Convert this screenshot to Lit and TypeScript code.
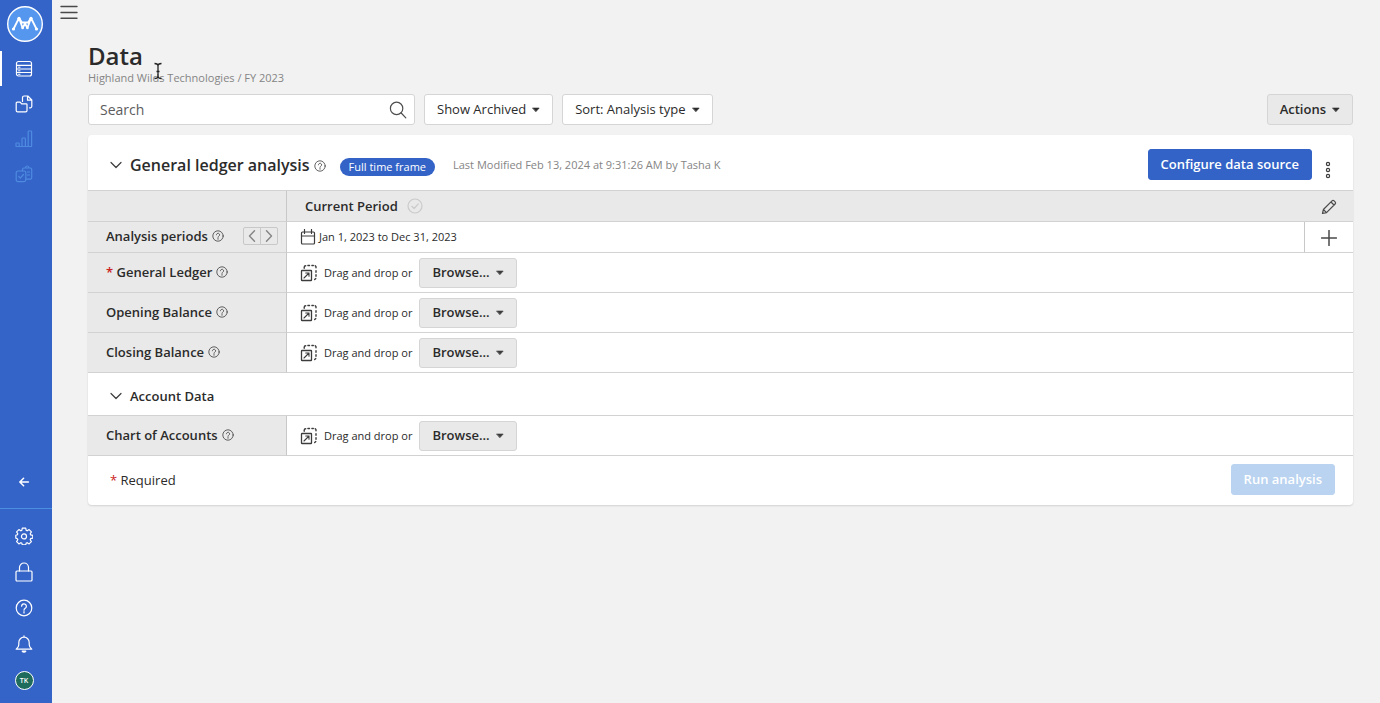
import { LitElement, html, css, svg, nothing } from "lit";
import { customElement, property } from "lit/decorators.js";

const shapes: Record<string, [string, unknown]> = {
  menu: ["0 0 18 14", svg`<path d="M1 1.5h16M1 7.5h16M1 13.2h16" stroke-width="1.4"/>`],
  data: ["0 0 18 18", svg`<rect x="1.5" y="1.5" width="15" height="14.5" rx="2"/><path d="M1.5 5.3h15M1.5 9h15M1.5 12.5h15" /><path d="M3.5 7.2h1.5M3.5 10.8h1.5M3.5 14.3h1.5" stroke-width="1"/>`],
  files: ["0 0 18 18", svg`<path d="M1.2 8.2a1 1 0 0 1 1-1h3l1.400 1.600h4.600a.8.8 0 0 1 .8.8v5.800a1.400 1.400 0 0 1-1.400 1.400H2.600a1.400 1.400 0 0 1-1.400-1.400z"/><path d="M7.500 6.500V2.600a1.600 1.600 0 0 1 1.600-1.600h3.700l4 4v6.200a1.600 1.600 0 0 1-1.600 1.600h-.7M12.500 1.200v4h4"/>`],
  chart: ["0 0 18 18", svg`<rect x="1" y="13" width="3.200" height="3.500" rx=".6"/><rect x="7" y="8" width="3.400" height="8.500" rx=".6"/><rect x="13.200" y="1" width="3.400" height="15.500" rx=".6"/><path d="M4.200 16.500h9"/>`],
  report: ["0 0 18 18", svg`<rect x="1.200" y="6" width="9.600" height="10.600" rx="1.800"/><path d="m3.800 11.500 1.600 1.700 3-3.700M7.500 5.800V4.400a1.400 1.400 0 0 1 1.400-1.400h6.400a1.400 1.400 0 0 1 1.400 1.400v8.400a1.400 1.400 0 0 1-1.400 1.400h-4.400M10.400 2.900c0-1 .8-1.900 1.800-1.900s1.800.9 1.800 1.900M12.500 7h2M12.500 10h2"/>`],
  back: ["0 0 18 18", svg`<path d="M13.400 9H5M8.600 5.200 4.800 9l3.800 3.800" stroke-width="1.500"/>`],
  gear: ["0 0 18 18", svg`<path d="M7.300 1.200h3.400l.5 2.200 1 .4 1.900-1.200 2.300 2.300-1.200 1.900.4 1 2.200.5v2.800l-2.200.6-.4 1 1.200 1.900-2.300 2.300-1.900-1.200-1 .4-.5 1.700H7.300l-.5-1.700-1-.4-1.900 1.200-2.300-2.300 1.200-1.900-.4-1-1.600-.6V8.300l1.600-.5.4-1-1.200-1.900 2.300-2.300 1.900 1.200 1-.4z" stroke-linejoin="round"/><circle cx="9" cy="9.400" r="2.500"/>`],
  lock: ["0 0 18 20", svg`<rect x="1" y="9" width="16" height="10" rx="1"/><path d="M4.500 9V5.500a4.500 4.500 0 0 1 9 0V9"/>`],
  help: ["0 0 18 18", svg`<circle cx="9" cy="9" r="7.800"/><path d="M6.600 7.200a2.400 2.400 0 1 1 3.600 2.100c-.8.500-1.200.9-1.200 1.900"/><path d="M9 12.700v1.200"/>`],
  bell: ["0 0 18 18", svg`<path d="M1.200 14.200c1.800-1.600 2.600-2.600 2.600-4.400V7.400a5.200 5.200 0 0 1 10.400 0v2.400c0 1.800.8 2.800 2.600 4.400zM9 2V.8"/><path d="M7.200 16.200a2 1.600 0 0 0 3.600 0z" fill="currentColor"/>`],
  search: ["0 0 18 18", svg`<circle cx="7.600" cy="7.400" r="6.200"/><path d="m12.200 12 4.600 4.800"/>`],
  chevron: ["0 0 12 12", svg`<path d="m1 3.500 5 5 5-5"/>`],
  left: ["0 0 12 12", svg`<path d="M8.500.8 3.500 6l5 5.200" stroke-width="1.400"/>`],
  right: ["0 0 12 12", svg`<path d="m3.500.8 5 5.200-5 5.200" stroke-width="1.400"/>`],
  dots: ["0 0 6 18", svg`<circle cx="3" cy="3" r="1.600"/><circle cx="3" cy="9" r="1.600"/><circle cx="3" cy="15" r="1.600"/>`],
  pencil: ["0 0 16 16", svg`<path d="m1.500 14.500.9-4L11 1.900a1.500 1.500 0 0 1 2.100 0l1 1a1.500 1.500 0 0 1 0 2.100L5.500 13.600zM10 3l3 3M2.400 10.500l3.100 3.100"/>`],
  plus: ["0 0 16 16", svg`<path d="M8 .5v15M.5 8h15" stroke-width="1.500"/>`],
  check: ["0 0 16 16", svg`<circle cx="8" cy="8" r="7"/><path d="m4.800 8.300 2.300 2.200 4.200-4.600"/>`],
  calendar: ["0 0 16 16", svg`<rect x="1.500" y="3" width="13" height="12" rx="1"/><path d="M1.500 7h13M4.500.5v4M11.500.5v4"/>`],
  drop: ["0 0 18 18", svg`<rect x="1.500" y="6.500" width="10" height="10" rx=".6" stroke-width="1.300"/><path d="m4 14 5-5M5.700 9H9v3.300" stroke-width="1.100"/><path d="M4.200 4.300V3.200a1.500 1.500 0 0 1 1.500-1.500M7.900 1.500h1.600M11.900 1.500h1.400M15.200 1.700l.8.9v1.200M16 6.800v1.400M16 10.800v1.500M15.800 14.600l-1.100 1" stroke-width="1.400"/>`],
  caret: ["0 0 8 6", svg`<path d="M.8 1h6.400L4 4.600z" fill="currentColor" stroke-width=".6"/>`],
};

@customElement("ui-icon")
class UiIcon extends LitElement {
  @property() name = "";
  @property({ type: Number }) size = 18;
  static styles = css`
    :host { display: inline-flex; flex: none; }
    svg { display: block; fill: none; stroke: currentColor; stroke-width: 1.2; stroke-linecap: round; stroke-linejoin: round; }
  `;
  render() {
    const [box, body] = shapes[this.name];
    const [, , w, h] = box.split(" ").map(Number);
    return html`<svg width=${this.size} height=${(this.size * h) / w} viewBox=${box} aria-hidden="true">${body}</svg>`;
  }
}

@customElement("app-sidebar")
class AppSidebar extends LitElement {
  static styles = css`
    :host { display: flex; flex-direction: column; width: 52px; flex: none; background: #3564c8; color: #fff; }
    .logo { display: block; width: 36px; height: 36px; margin: 6px 0 9px 7px; }
    .group { display: flex; flex-direction: column; }
    .item { display: flex; align-items: center; justify-content: center; height: 35px; padding: 0 6px 0 2px; color: inherit; border: 0; background: none; font: inherit; box-sizing: border-box; width: 100%; }
    .active { border-left: 2px solid #fff; padding-left: 0; }
    .off { color: #4e8be0; }
    .push { margin-top: auto; }
    .tools { border-top: 1px solid #4a8fe0; margin-top: 9px; padding: 9px 0 5px; }
    .tools .item { height: 36px; }
    .avatar { display: flex; align-items: center; justify-content: center; width: 19px; height: 19px; box-sizing: border-box; border-radius: 50%; border: 1px solid #fff; background: #1f6b5c; font: 600 7px "Open Sans", sans-serif; }
  `;
  render() {
    const link = (icon: string, label: string, cls = "") =>
      html`<a class="item ${cls}" href="#" aria-label=${label}><ui-icon name=${icon}></ui-icon></a>`;
    return html`
      <svg class="logo" viewBox="0 0 36 36" aria-label="Home">
        <circle cx="18" cy="18" r="17.300" fill="#5596ee" stroke="#fff" stroke-width="1.400"/>
        <path d="M6.500 23 12 12l3.600 10L18 17.500l2.400 4.500L24 12l5.500 11M12 12l3 4.500h6l3-4.500" fill="none" stroke="#fff" stroke-width="1.800" stroke-linejoin="round" stroke-linecap="round"/>
        <g fill="#fff"><circle cx="6.500" cy="23" r="1.600"/><circle cx="12" cy="12.300" r="1.600"/><circle cx="15.600" cy="22" r="1.300"/><circle cx="20.400" cy="22" r="1.300"/><circle cx="24" cy="12.300" r="1.600"/><circle cx="29.500" cy="23" r="1.600"/></g>
      </svg>
      <nav class="group">
        ${link("data", "Data", "active")} ${link("files", "Files")}
        ${link("chart", "Charts", "off")} ${link("report", "Reports", "off")}
      </nav>
      <button class="item push" aria-label="Back"><ui-icon name="back"></ui-icon></button>
      <div class="group tools">
        ${link("gear", "Settings")} ${link("lock", "Security")} ${link("help", "Help")} ${link("bell", "Notifications")}
        <button class="item" aria-label="Account"><span class="avatar">TK</span></button>
      </div>`;
  }
}

@customElement("app-root")
class AppRoot extends LitElement {
  static styles = css`
    :host { display: flex; min-height: 100vh; background: #f2f2f2; color: #2b2b2b; font: 13px/18px "Open Sans", sans-serif; }
    button, input { font: inherit; color: inherit; margin: 0; }
    button { cursor: pointer; }
    main { flex: 1; min-width: 0; }
    .plain { display: inline-flex; padding: 0; border: 0; background: none; color: #4a4a4a; }
    .menu { padding: 5px 8px; }
    .page { padding: 16px 27px 0 36px; }
    .head { position: relative; }
    h1 { margin: 0; font-size: 24px; line-height: 32px; font-weight: 600; }
    .crumb { margin: 0; font-size: 11px; line-height: 12px; color: #858585; }
    .cursor { position: absolute; left: 65px; top: 22px; }
    .bar { display: flex; gap: 9px; margin: 10px 0; }
    .search { display: flex; align-items: center; width: 327px; height: 31px; box-sizing: border-box; padding: 0 7px 0 11px; background: #fff; border: 1px solid #d5d5d5; border-radius: 3px; color: #4d4d4d; }
    .search input { flex: 1; min-width: 0; border: 0; padding: 0; outline: 0; background: none; font-size: 14px; }
    .search input::placeholder { color: #5c5c5c; opacity: 1; }
    .btn { display: inline-flex; align-items: center; gap: 6px; height: 31px; box-sizing: border-box; padding: 0 12px 2px; border: 1px solid #d5d5d5; border-radius: 3px; background: #fff; white-space: nowrap; }
    .btn ui-icon { margin-top: 3px; }
    .grey { background: #e9e9e9; font-weight: 600; }
    .blue { background: #3363c7; border-color: #3363c7; color: #fff; font-weight: 600; }
    .blue:disabled { background: #b9d3f0; border-color: #b9d3f0; color: #fff; }
    .end { margin-left: auto; }
    .card { background: #fff; border-radius: 4px; box-shadow: 0 1px 2px #0002; }
    .title { display: flex; align-items: center; height: 56px; box-sizing: border-box; padding: 4px 18px 0 22px; border-bottom: 1px solid #d2d2d2; }
    h2 { margin: 0 4px 0 8px; font-size: 16px; line-height: 24px; font-weight: 600; }
    .title ui-icon { color: #3c3c3c; }
    .tip { margin-top: 3px; }
    .pill { margin: 4px 18px 0 14px; padding: 0 9px; border-radius: 9px; background: #3363c7; color: #fff; font-size: 11px; line-height: 18px; font-weight: 500; }
    .meta { font-size: 11px; color: #858585; }
    .kebab { margin: 10px 4px 0 13px; }
    table { width: 100%; border-collapse: separate; border-spacing: 0; }
    th, td { padding: 0; text-align: left; border-bottom: 1px solid #d2d2d2; box-sizing: border-box; height: 40px; }
    th { font-weight: 600; }
    .short th, .short td { height: 31px; }
    .grid th:first-child { width: 199px; border-right: 1px solid #c8c8c8; background: #e9e9e9; padding: 0 8px 2px 18px; }
    .heads th, .heads td { background: #e9e9e9; }
    .line { display: flex; align-items: center; gap: 4px; }
    .line ui-icon { color: #3c3c3c; }
    .period { gap: 9px; padding-left: 18px; }
    .period ui-icon { color: #cacaca; }
    .dates { gap: 3px; padding-left: 13px; font-size: 11px; }
    .drag { gap: 6px; padding-left: 13px; font-size: 11px; }
    .drag .btn { margin-left: 1px; font-size: 13px; height: 30px; }
    .tool { width: 49px; text-align: center; }
    .tool .plain { vertical-align: middle; }
    .add { border-left: 1px solid #c8c8c8; }
    .pager { display: flex; margin-left: auto; border: 1px solid #c8c8c8; border-radius: 2px; }
    .pager button { padding: 2px; border: 0; background: none; display: flex; color: #8a8a8a; }
    .pager button + button { border-left: 1px solid #c8c8c8; }
    .pager ui-icon { color: #858585; }
    .req { color: #cc2222; }
    .grid .section { height: 43px; }
    .section .line { gap: 8px; padding: 3px 0 0 22px; }
    .sub { font-weight: 600; }
    .foot { display: flex; align-items: center; height: 49px; box-sizing: border-box; padding: 0 18px 2px 22px; }
  `;

  private fileRow(label: string, required = false) {
    return html`<tr>
      <th scope="row"><div class="line"><span>${required ? html`<span class="req">*</span> ` : nothing}${label}</span><ui-icon name="help" size="12"></ui-icon></div></th>
      <td colspan="2"><div class="line drag"><ui-icon name="drop"></ui-icon><span>Drag and drop or</span>
        <button class="btn grey" aria-label="Browse ${label}">Browse...<ui-icon name="caret" size="8"></ui-icon></button></div></td>
    </tr>`;
  }

  render() {
    return html`
      <app-sidebar></app-sidebar>
      <main>
        <button class="plain menu" aria-label="Menu"><ui-icon name="menu"></ui-icon></button>
        <div class="page">
          <header class="head">
            <h1>Data</h1>
            <p class="crumb">Highland Wilds Technologies / FY 2023</p>
            <svg class="cursor" width="10" height="18" viewBox="0 0 10 18" fill="none" stroke="#222" stroke-width="1.300" aria-hidden="true"><path d="M1.500 1.500C4 1.500 5 2.200 5 4v10c0 1.800-1 2.500-3.500 2.500M8.500 1.500C6 1.500 5 2.200 5 4M5 14c0 1.800 1 2.500 3.500 2.500M3.500 9.500h3"/></svg>
          </header>
          <div class="bar">
            <label class="search"><input type="text" placeholder="Search" aria-label="Search"><ui-icon name="search"></ui-icon></label>
            <button class="btn">Show Archived<ui-icon name="caret" size="8"></ui-icon></button>
            <button class="btn">Sort: Analysis type<ui-icon name="caret" size="8"></ui-icon></button>
            <button class="btn grey end">Actions<ui-icon name="caret" size="8"></ui-icon></button>
          </div>
          <section class="card">
            <div class="title">
              <button class="plain" aria-label="Collapse analysis"><ui-icon name="chevron" size="12"></ui-icon></button>
              <h2>General ledger analysis</h2>
              <ui-icon class="tip" name="help" size="12"></ui-icon>
              <span class="pill">Full time frame</span>
              <span class="meta">Last Modified Feb 13, 2024 at 9:31:26 AM by Tasha K</span>
              <button class="btn blue end">Configure data source</button>
              <button class="plain kebab" aria-label="More"><ui-icon name="dots" size="6"></ui-icon></button>
            </div>
            <table class="grid">
              <tr class="short heads">
                <th></th>
                <th scope="col"><div class="line period">Current Period<ui-icon name="check" size="16"></ui-icon></div></th>
                <td class="tool"><button class="plain" aria-label="Edit period"><ui-icon name="pencil" size="16"></ui-icon></button></td>
              </tr>
              <tr class="short">
                <th scope="row"><div class="line"><span>Analysis periods</span><ui-icon name="help" size="12"></ui-icon>
                  <span class="pager"><button aria-label="Previous"><ui-icon name="left" size="12"></ui-icon></button><button aria-label="Next"><ui-icon name="right" size="12"></ui-icon></button></span></div></th>
                <td><div class="line dates"><ui-icon name="calendar" size="16"></ui-icon>Jan 1, 2023 to Dec 31, 2023</div></td>
                <td class="tool add"><button class="plain" aria-label="Add period"><ui-icon name="plus" size="16"></ui-icon></button></td>
              </tr>
              ${this.fileRow("General Ledger", true)} ${this.fileRow("Opening Balance")} ${this.fileRow("Closing Balance")}
              <tr><td class="section" colspan="3"><div class="line"><button class="plain" aria-label="Collapse account data"><ui-icon name="chevron" size="12"></ui-icon></button><strong class="sub">Account Data</strong></div></td></tr>
              ${this.fileRow("Chart of Accounts")}
            </table>
            <div class="foot"><span><span class="req">*</span> Required</span><button class="btn blue end" disabled>Run analysis</button></div>
          </section>
        </div>
      </main>`;
  }
}
